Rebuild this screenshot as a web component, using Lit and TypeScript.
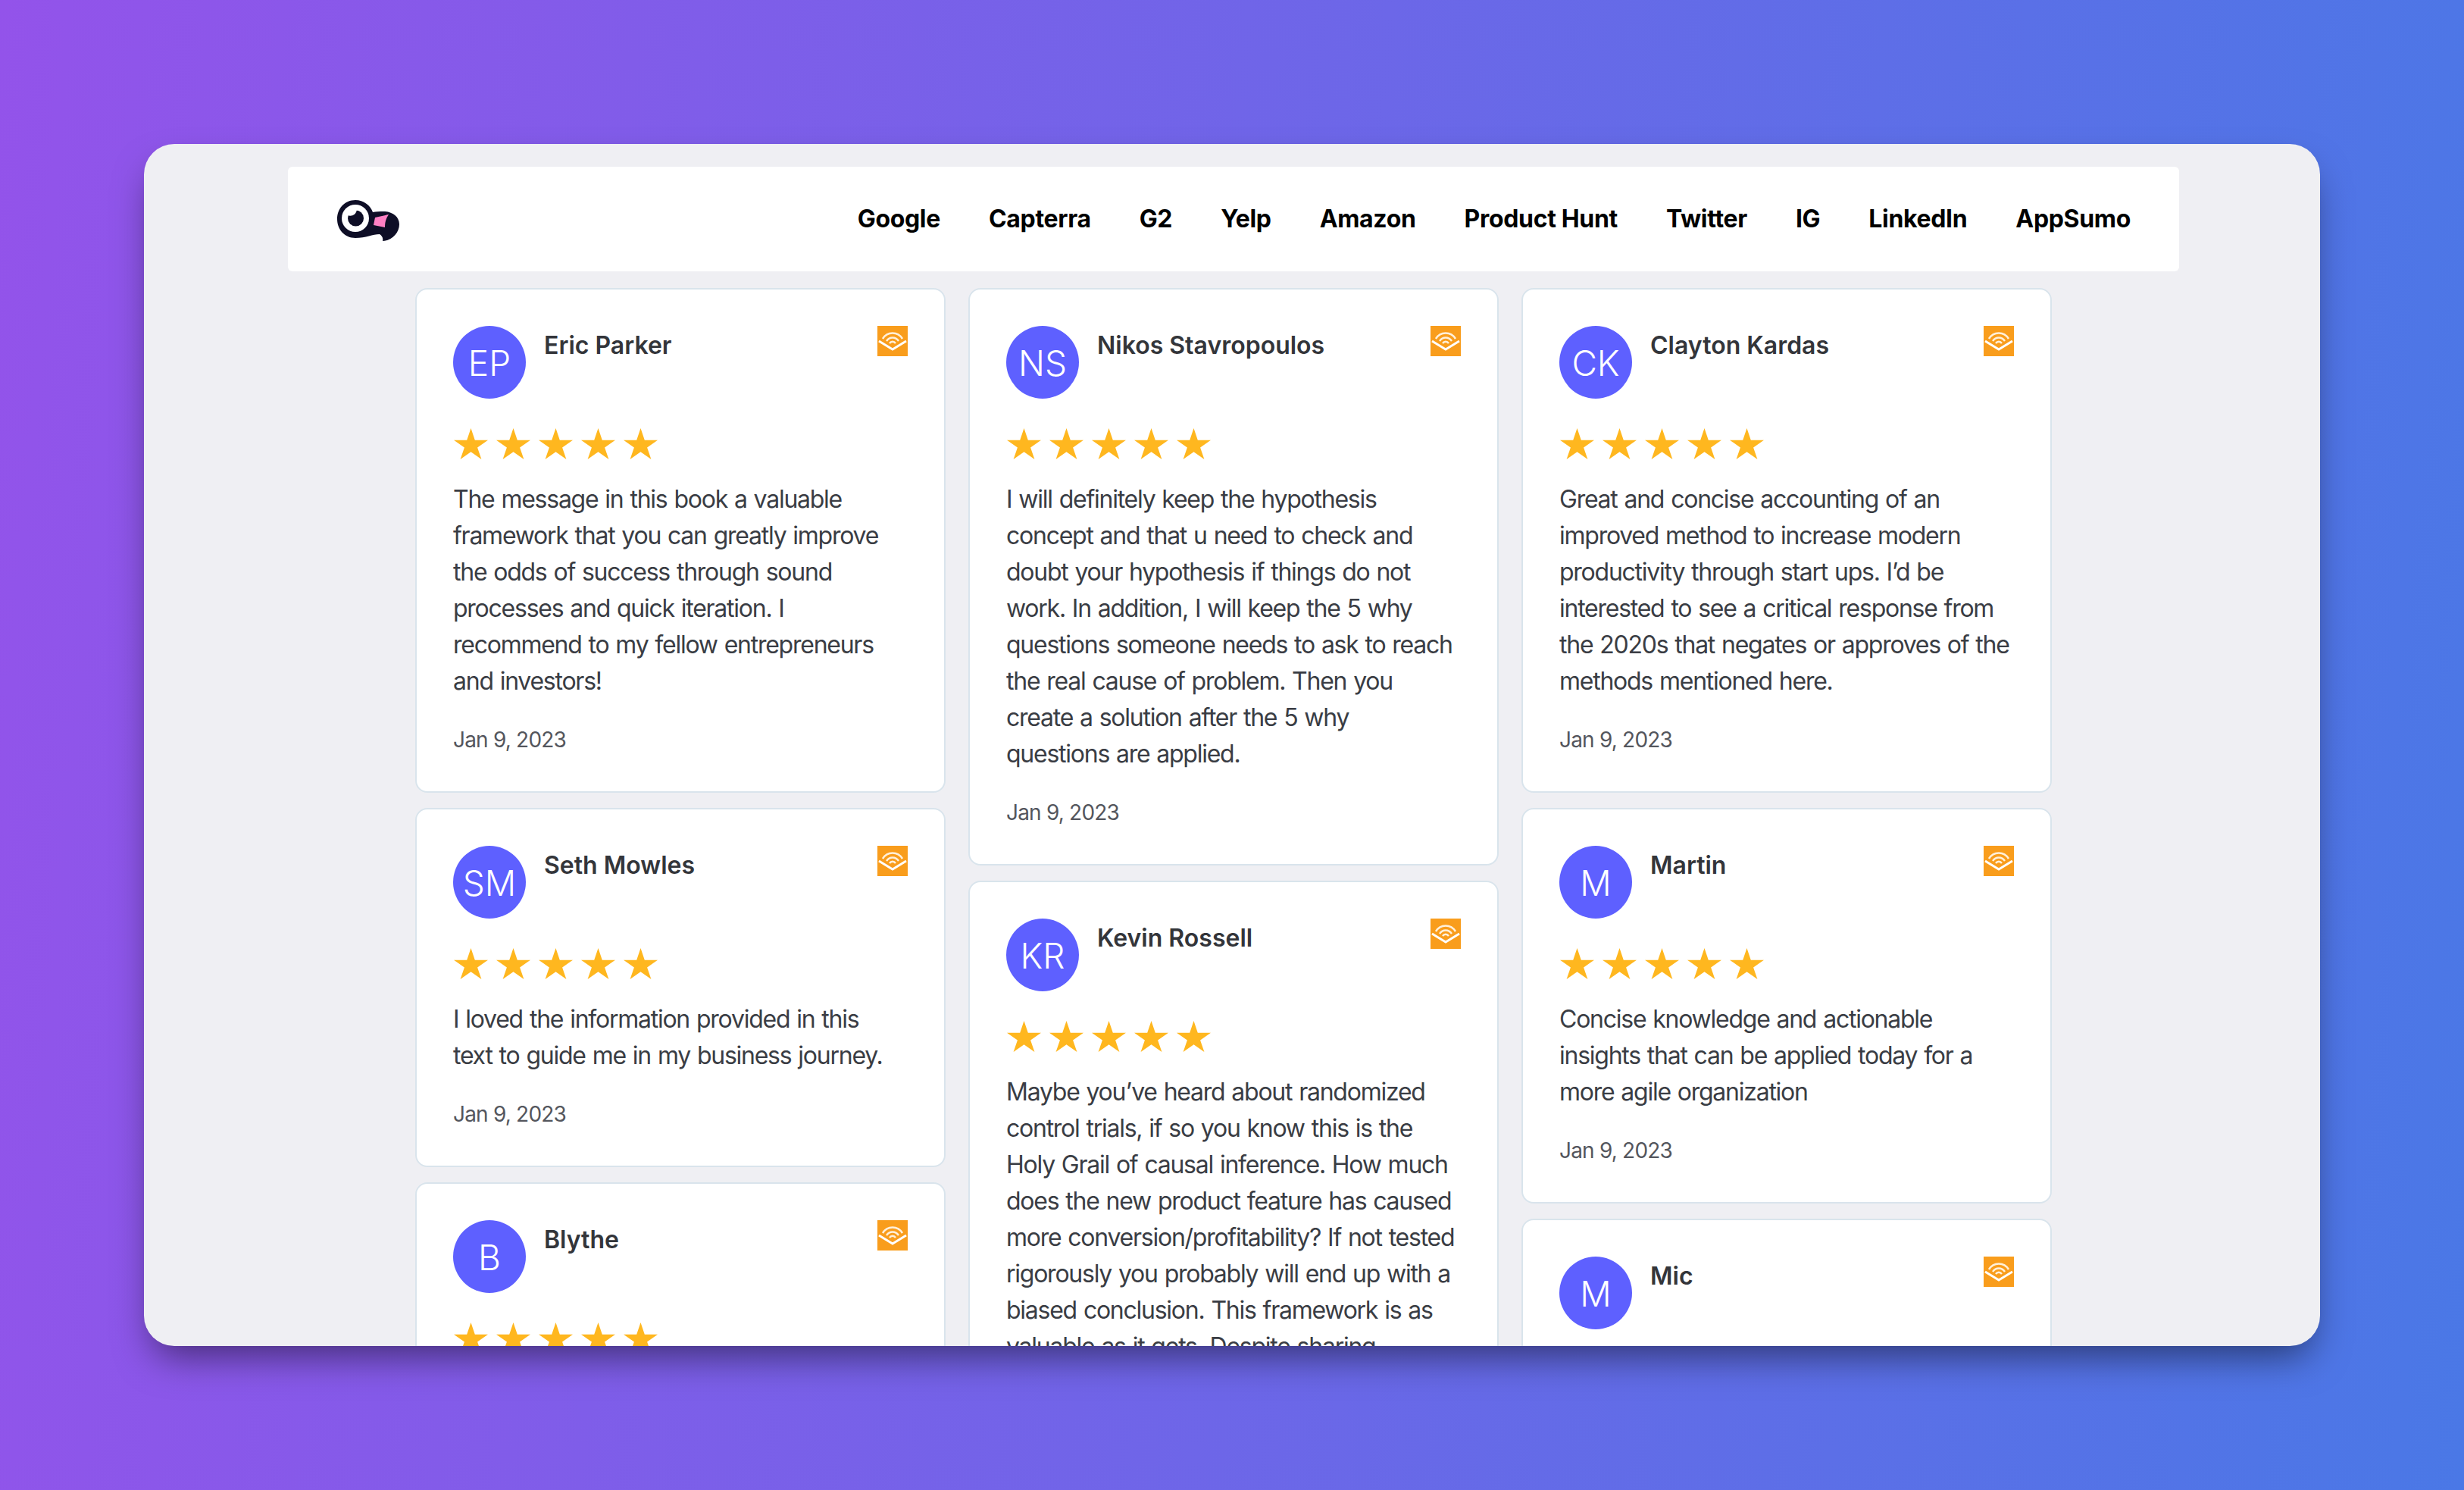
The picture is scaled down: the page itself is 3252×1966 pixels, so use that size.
import { LitElement, html, css, svg } from "lit";
import { customElement } from "lit/decorators.js";

type Review = { i: string; n: string; t: string[]; };

const columns: Review[][] = [
  [
    { i: "EP", n: "Eric Parker", t: ["The message in this book a valuable", "framework that you can greatly improve", "the odds of success through sound", "processes and quick iteration. I", "recommend to my fellow entrepreneurs", "and investors!"] },
    { i: "SM", n: "Seth Mowles", t: ["I loved the information provided in this", "text to guide me in my business journey."] },
    { i: "B", n: "Blythe", t: ["Clear and practical advice for anyone", "who is building something new."] },
  ],
  [
    { i: "NS", n: "Nikos Stavropoulos", t: ["I will definitely keep the hypothesis", "concept and that u need to check and", "doubt your hypothesis if things do not", "work. In addition, I will keep the 5 why", "questions someone needs to ask to reach", "the real cause of problem. Then you", "create a solution after the 5 why", "questions are applied."] },
    { i: "KR", n: "Kevin Rossell", t: ["Maybe you’ve heard about randomized", "control trials, if so you know this is the", "Holy Grail of causal inference. How much", "does the new product feature has caused", "more conversion/profitability? If not tested", "rigorously you probably will end up with a", "biased conclusion. This framework is as", "valuable as it gets. Despite sharing"] },
  ],
  [
    { i: "CK", n: "Clayton Kardas", t: ["Great and concise accounting of an", "improved method to increase modern", "productivity through start ups. I’d be", "interested to see a critical response from", "the 2020s that negates or approves of the", "methods mentioned here."] },
    { i: "M", n: "Martin", t: ["Concise knowledge and actionable", "insights that can be applied today for a", "more agile organization"] },
    { i: "M", n: "Mic", t: ["A short and useful read."] },
  ],
];

const links = ["Google", "Capterra", "G2", "Yelp", "Amazon", "Product Hunt", "Twitter", "IG", "LinkedIn", "AppSumo"];

const star = svg`<polygon points="22.5,0 27.8,15.7 45,15.7 31.1,25.4 36.4,41 22.5,31.3 8.6,41 13.9,25.4 0,15.7 17.2,15.7" fill="#ffb71f"></polygon>`;

@customElement("app-root")
export class AppRoot extends LitElement {
  static styles = css`
    :host {
      display: block;
      width: 3252px;
      height: 1966px;
      overflow: hidden;
      padding: 190px 190px 190px 190px;
      box-sizing: border-box;
      background: linear-gradient(95deg, #9353ea 0%, #4a78e6 100%);
      font-family: Inter, "Liberation Sans", sans-serif;
    }
    .window {
      width: 2872px;
      height: 1586px;
      box-sizing: border-box;
      padding: 30px 0 0 190px;
      background: #efeff3;
      border-radius: 40px;
      overflow: hidden;
      box-shadow: 0 25px 50px -12px rgba(0, 0, 0, 0.5);
    }
    nav {
      width: 2496px;
      height: 138px;
      box-sizing: border-box;
      padding: 0 64px 0 65px;
      background: #fff;
      border-radius: 6px;
      display: flex;
      align-items: center;
    }
    .logo { display: block; width: 82px; height: 54px; margin-top: 4px; }
    .links { margin-left: auto; display: flex; gap: 64px; }
    .links a {
      font-family: Inter, sans-serif;
      font-size: 32px;
      font-weight: 700;
      letter-spacing: -0.33px;
      color: #000;
      line-height: 40px;
    }
    .cols {
      display: flex;
      gap: 30px;
      margin: 22px 0 0 168px;
      width: 2160px;
    }
    .col { width: 700px; display: flex; flex-direction: column; gap: 20px; }
    .card {
      background: #fff;
      border: 2px solid #d9e4ec;
      border-radius: 16px;
      padding: 48px 48px 47px;
    }
    .head { display: flex; gap: 24px; height: 96px; }
    .avatar {
      width: 96px;
      height: 96px;
      flex: none;
      border-radius: 50%;
      background: #5e60ff;
      color: #fff;
      display: flex;
      align-items: center;
      justify-content: center;
      padding-top: 2px;
      box-sizing: border-box;
      font-size: 46px;
      font-weight: 350;
    }
    .name {
      flex: 1;
      padding-top: 2px;
      font-size: 32px;
      font-weight: 600;
      line-height: 48px;
      color: #33353a;
    }
    .aud { display: block; width: 40px; height: 40px; flex: none; }
    .stars { display: flex; gap: 11px; margin: 39px 0 0 1px; }
    .stars svg { display: block; width: 45px; height: 41px; }
    .text {
      margin: 29px 0 0;
      font-size: 32px;
      font-weight: 380;
      letter-spacing: -1.25px;
      word-spacing: 1.2px;
      line-height: 48px;
      color: #3a3d44;
      white-space: nowrap;
    }
    .date {
      margin-top: 32px;
      font-size: 28px;
      letter-spacing: -0.8px;
      line-height: 42px;
      color: #54565d;
    }
  `;

  private logo() {
    return html`<svg class="logo" viewBox="0 0 82 54">
      <path d="M24 0C35 0 44 7 47 16C51 15 56 15 61 15C73 15 82 22 82 32C82 43 72 54 60 54C61 50 59 47 56 45C47 45 38 50 24 50C10 50 0 39 0 25C0 11 10 0 24 0Z" fill="#0e0e26"></path>
      <circle cx="24" cy="24" r="18" fill="#fff"></circle>
      <circle cx="24.5" cy="24" r="10.5" fill="#0e0e26"></circle>
      <path d="M13 20C19 22 25 20 26 12L14 12Z" fill="#fff"></path>
      <path d="M50 23L68 19C64 25 63 30 63 36L48 33Z" fill="#ff80c4"></path>
    </svg>`;
  }

  private audible() {
    return html`<svg class="aud" viewBox="0 0 40 40">
      <rect width="40" height="40" fill="#f99d1c"></rect>
      <path d="M2 20L20 31L38 20" fill="none" stroke="#fff" stroke-width="3"></path>
      <g fill="none" stroke="#fff0da">
        <path d="M7 17C13 7 27 7 33 17" stroke-width="2.6"></path>
        <path d="M12 20C16 14 24 14 28 20" stroke-width="2.4"></path>
        <path d="M16 23C18 20 22 20 24 23" stroke-width="2.4"></path>
      </g>
    </svg>`;
  }

  private card(r: Review) {
    return html`<article class="card">
      <div class="head">
        <div class="avatar">${r.i}</div>
        <div class="name">${r.n}</div>
        ${this.audible()}
      </div>
      <div class="stars">
        ${[0, 1, 2, 3, 4].map(() => html`<svg viewBox="0 0 45 41">${star}</svg>`)}
      </div>
      <p class="text">${r.t.map((l) => html`${l}<br />`)}</p>
      <div class="date">Jan 9, 2023</div>
    </article>`;
  }

  render() {
    return html`<div class="window">
      <nav>
        ${this.logo()}
        <div class="links">${links.map((l) => html`<a>${l}</a>`)}</div>
      </nav>
      <div class="cols">
        ${columns.map((c) => html`<div class="col">${c.map((r) => this.card(r))}</div>`)}
      </div>
    </div>`;
  }
}
